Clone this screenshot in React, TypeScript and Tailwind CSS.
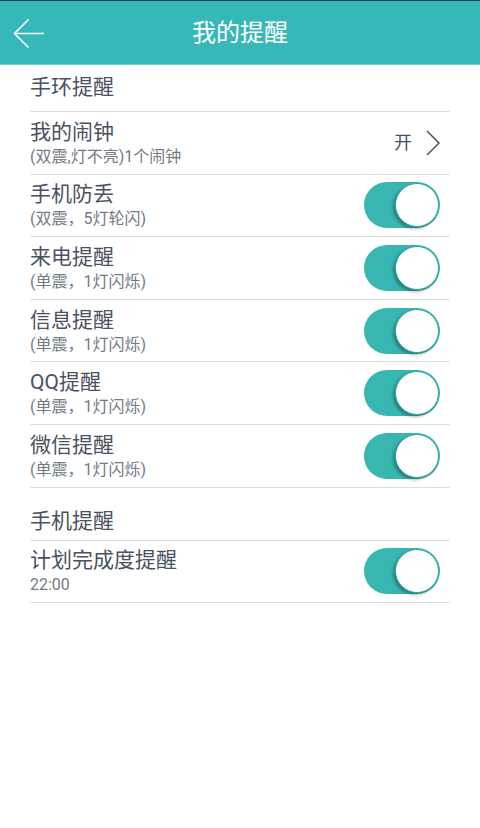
import React from "react";

const font = { fontFamily: "Roboto, 'Noto Sans CJK SC', sans-serif" };

function Toggle() {
  return (
    <div className="relative w-[76px] h-[46px] rounded-full bg-[#38b6b2] shrink-0">
      <div className="absolute right-[1px] top-[1px] w-[44px] h-[44px] rounded-full bg-white border border-[#2fa8a4] shadow-[-2px_2px_3px_rgba(0,0,0,0.3)]" />
    </div>
  );
}

function Row({ title, sub, right }: { title: string; sub: string; right: React.ReactNode }) {
  return (
    <div className="flex items-center justify-between h-[62.6px] border-b border-[#dcdcdc]">
      <div className="flex flex-col">
        <div className="text-[21px] leading-[26px] text-[#4a5262]">{title}</div>
        <div className="text-[16px] leading-[20px] text-[#737a84] mt-[2px]">{sub}</div>
      </div>
      <div className="pr-[10px] flex items-center">{right}</div>
    </div>
  );
}

export default function App() {
  const toggles = [
    ["手机防丢", "(双震，5灯轮闪)"],
    ["来电提醒", "(单震，1灯闪烁)"],
    ["信息提醒", "(单震，1灯闪烁)"],
    ["QQ提醒", "(单震，1灯闪烁)"],
    ["微信提醒", "(单震，1灯闪烁)"],
  ];
  return (
    <div className="w-[480px] h-[828px] bg-white" style={font}>
      <div className="h-[65px] bg-[#36b8b8] border-t border-[#1d4a4e] border-b border-b-[#6fd0d0] relative flex items-center justify-center">
        <svg className="absolute left-[13px] top-[17px]" width="32" height="31" viewBox="0 0 32 31">
          <path d="M31 15.5H2M15.5 1.5L1.5 15.5L15.5 29.5" fill="none" stroke="white" strokeWidth="1.6" />
        </svg>
        <div className="text-white text-[24px] leading-none">我的提醒</div>
      </div>
      <div className="px-[30px]">
        <div className="h-[47px] flex items-end pb-[11px] border-b border-[#dcdcdc] text-[21px] leading-[26px] text-[#4a5262]">
          手环提醒
        </div>
        <Row
          title="我的闹钟"
          sub="(双震,灯不亮)1个闹钟"
          right={
            <div className="flex items-center gap-[14px]">
              <span className="text-[18px] text-[#4a5262]">开</span>
              <svg width="14" height="26" viewBox="0 0 14 26">
                <path d="M1 1L13 13L1 25" fill="none" stroke="#4a5262" strokeWidth="1.5" />
              </svg>
            </div>
          }
        />
        {toggles.map(([t, s]) => (
          <Row key={t} title={t} sub={s} right={<Toggle />} />
        ))}
        <div className="h-[53px] flex items-end pb-[6px] border-b border-[#dcdcdc] text-[21px] leading-[26px] text-[#4a5262]">
          手机提醒
        </div>
        <Row title="计划完成度提醒" sub="22:00" right={<Toggle />} />
      </div>
    </div>
  );
}
